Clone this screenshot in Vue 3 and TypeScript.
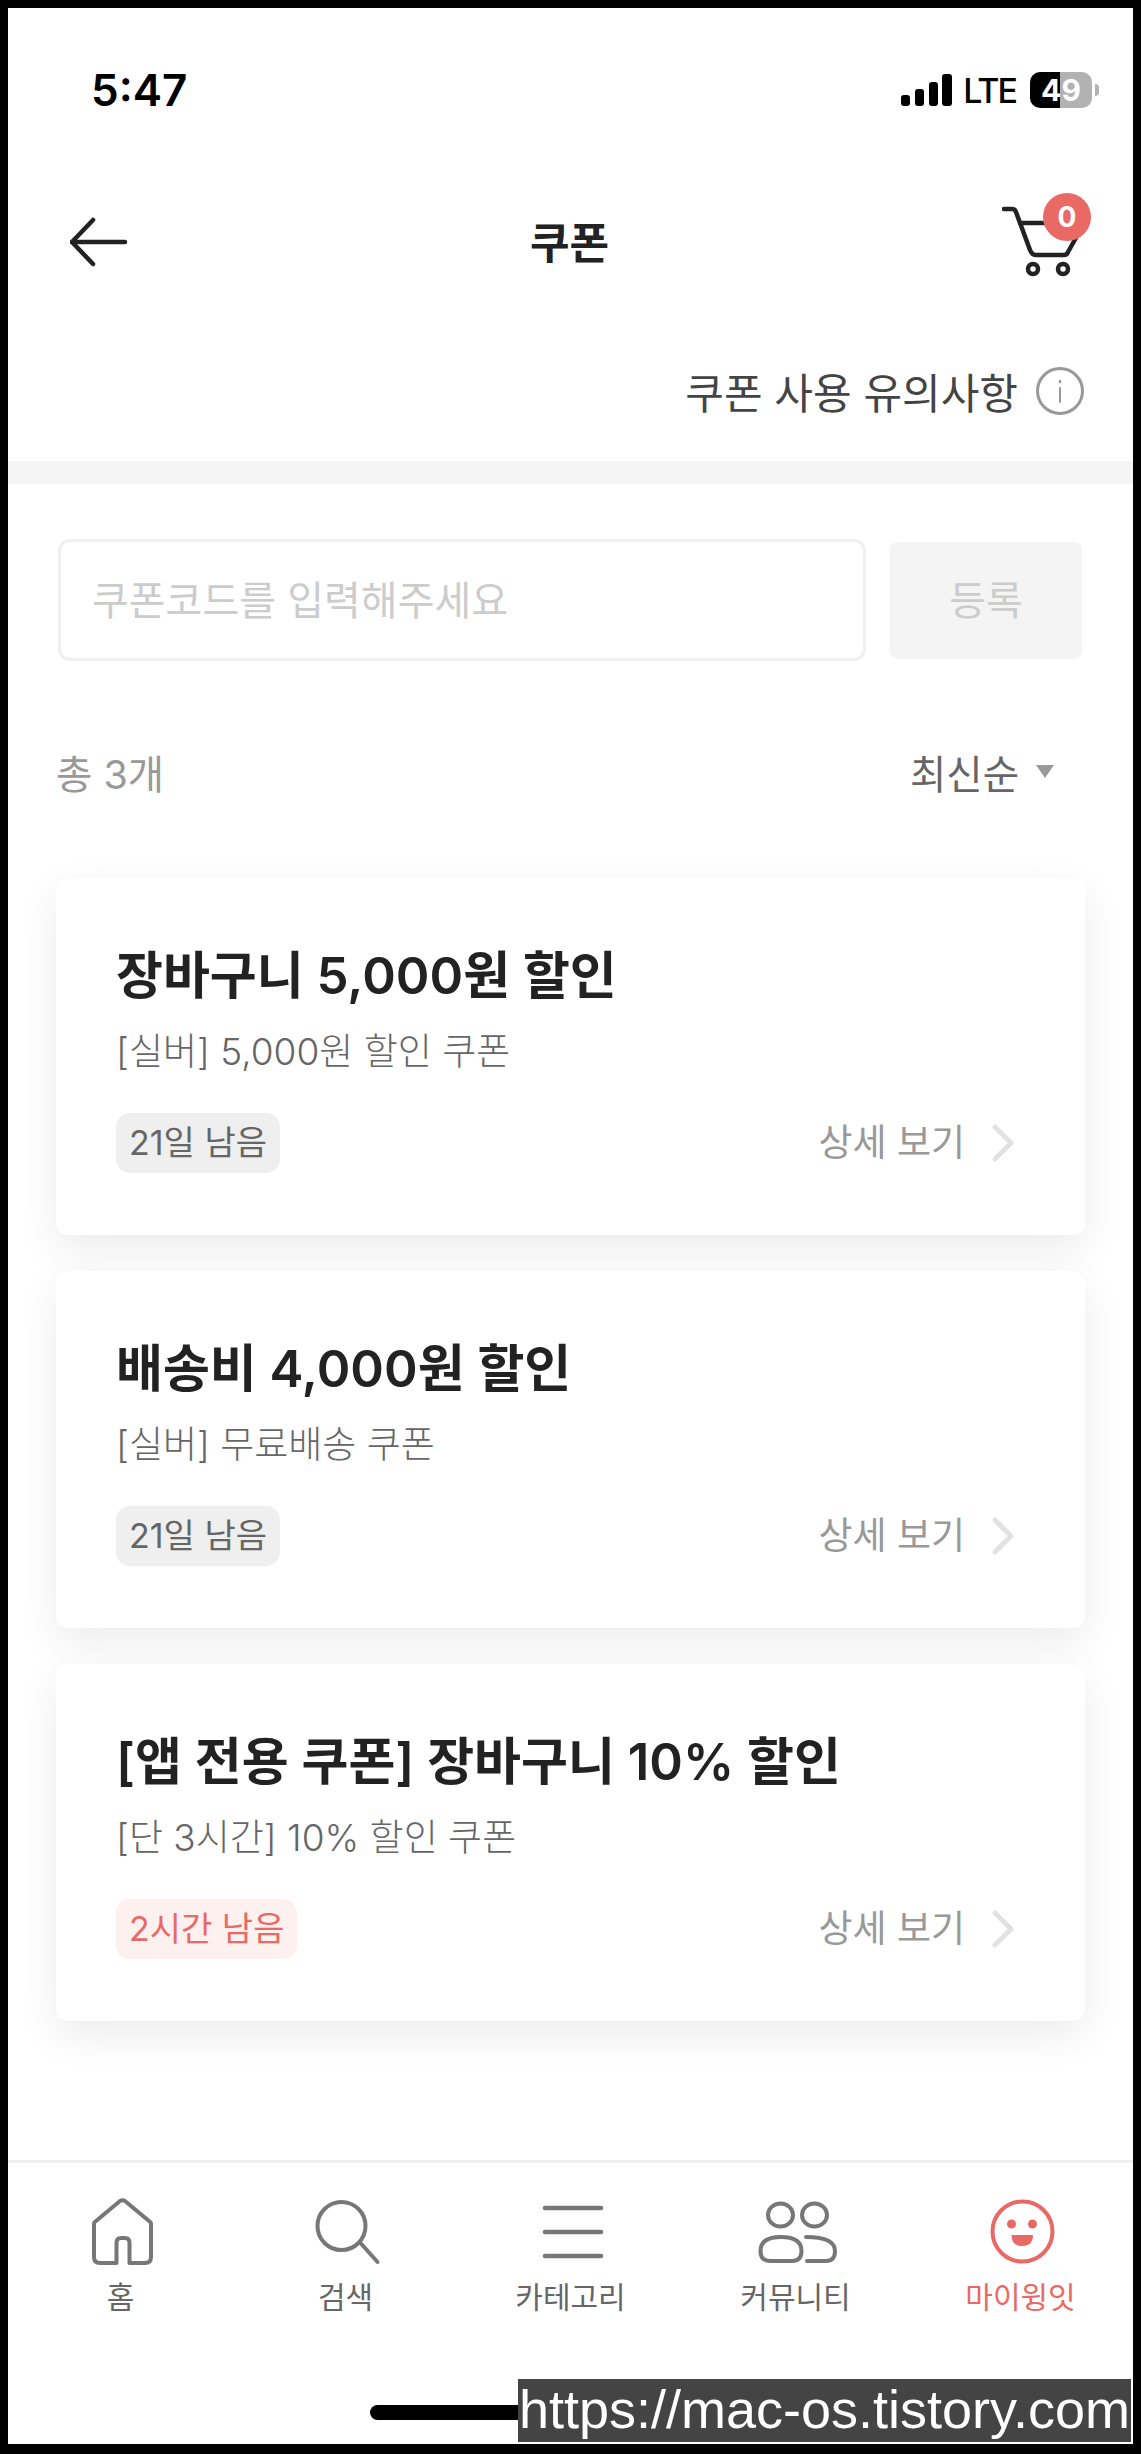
<template>
  <div class="screen">
    <div class="status-bar">
      <span class="clock">5:47</span>
      <div class="status-right">
        <svg class="signal" width="51" height="32" viewBox="0 0 51 32">
          <rect x="0" y="21" width="9" height="11" rx="3" />
          <rect x="14" y="15" width="9" height="17" rx="3" />
          <rect x="28" y="8" width="9" height="24" rx="3" />
          <rect x="41" y="0" width="10" height="32" rx="3" />
        </svg>
        <span class="lte">LTE</span>
        <div class="battery">
          <span class="battery-num">49</span>
        </div>
        <span class="battery-cap"></span>
      </div>
    </div>

    <header class="nav-header">
      <svg class="back" width="58" height="50" viewBox="0 0 58 50" fill="none" stroke="#222" stroke-width="4.5" stroke-linecap="round" stroke-linejoin="round">
        <path d="M23 3 L2 25 L23 47" />
        <path d="M2 25 H55" />
      </svg>
      <h1 class="page-title">쿠폰</h1>
      <div class="cart">
        <svg width="82" height="82" viewBox="0 0 82 82" fill="none" stroke="#222" stroke-width="4.5" stroke-linecap="round" stroke-linejoin="round">
          <path d="M2 9 H10 Q13 9 14 12 L28 50 Q30 55 34 55 H62 Q65 55 66 52 L75 36" />
          <path d="M18 23 H45" />
          <circle cx="31" cy="69" r="5" />
          <circle cx="61" cy="69" r="5" />
        </svg>
        <span class="cart-badge">0</span>
      </div>
    </header>

    <div class="notice-row">
      <span>쿠폰 사용 유의사항</span>
      <svg width="50" height="50" viewBox="0 0 50 50" fill="none" stroke="#999" stroke-linecap="round">
        <circle cx="25" cy="25" r="22.5" stroke-width="3" />
        <path d="M25 22 V36" stroke-width="2" />
        <path d="M25 15 V16" stroke-width="2.5" />
      </svg>
    </div>

    <div class="band"></div>

    <main class="content">
      <div class="code-form">
        <input class="code-input" type="text" placeholder="쿠폰코드를 입력해주세요" />
        <button class="code-submit" type="button">등록</button>
      </div>

      <div class="list-head">
        <span class="total">총 3개</span>
        <span class="sort">최신순<i class="caret"></i></span>
      </div>

      <div class="coupons">
        <article v-for="c in coupons" :key="c.title" class="coupon">
          <h2 class="coupon-title">{{ c.title }}</h2>
          <p class="coupon-desc">{{ c.desc }}</p>
          <div class="coupon-foot">
            <span class="left-tag" :class="{ urgent: c.urgent }">{{ c.left }}</span>
            <span class="detail">
              <span class="detail-text">상세 보기</span>
              <svg width="24" height="38" viewBox="0 0 24 38" fill="none" stroke="#e2e2e2" stroke-width="5" stroke-linecap="round" stroke-linejoin="round">
                <path d="M4 3 L20 19 L4 35" />
              </svg>
            </span>
          </div>
        </article>
      </div>
    </main>

    <nav class="tabbar">
      <div v-for="t in tabs" :key="t.label" class="tab" :class="{ active: t.active }">
        <svg width="72" height="72" viewBox="0 0 72 72" fill="none" :stroke="t.active ? '#e96a65' : '#777'" stroke-width="4" stroke-linecap="round" stroke-linejoin="round">
          <template v-if="t.icon === 'home'">
            <path d="M31.5 67 H15 Q9 67 9 61 V28 Q9 26 11 25 L35 5 Q37.5 3.5 40 5 L64 25 Q66 26 66 28 V61 Q66 67 60 67 H44.5 V47 Q44.5 42 40 42 H36 Q31.5 42 31.5 47 Z" />
          </template>
          <template v-else-if="t.icon === 'search'">
            <circle cx="31.5" cy="30" r="24" />
            <path d="M50.5 47 L67.5 66" />
          </template>
          <template v-else-if="t.icon === 'menu'">
            <path d="M10 12 H66 M10 36 H66 M10 60 H66" stroke-width="4.5" />
          </template>
          <template v-else-if="t.icon === 'people'">
            <ellipse cx="20.5" cy="19" rx="12.5" ry="11.5" />
            <ellipse cx="54.5" cy="19" rx="12.5" ry="11.5" />
            <path d="M10 65 H32 Q41.5 65 41.5 55 Q41.5 41 21 41 Q0.5 41 0.5 55 Q0.5 65 10 65 Z" />
            <path d="M46 41 Q75 41 75 55 Q75 65 66 65 H47" />
          </template>
          <template v-else>
            <circle cx="37.5" cy="35.5" r="30" />
            <circle cx="26.5" cy="28" r="4.5" fill="#e96a65" stroke="none" />
            <circle cx="47.5" cy="28" r="4.5" fill="#e96a65" stroke="none" />
            <path d="M26.5 39 H48 Q48 50 37 50 Q26.5 50 26.5 39 Z" fill="#e96a65" stroke="none" />
          </template>
        </svg>
        <span class="tab-label">{{ t.label }}</span>
      </div>
    </nav>

    <div class="home-slot"><span class="home-bar"></span></div>

    <div class="watermark">https://mac-os.tistory.com</div>
  </div>
</template>

<script setup lang="ts">
interface Coupon {
  title: string;
  desc: string;
  left: string;
  urgent?: boolean;
}

interface Tab {
  label: string;
  icon: string;
  active?: boolean;
}

const coupons: Coupon[] = [
  { title: "장바구니 5,000원 할인", desc: "[실버] 5,000원 할인 쿠폰", left: "21일 남음" },
  { title: "배송비 4,000원 할인", desc: "[실버] 무료배송 쿠폰", left: "21일 남음" },
  { title: "[앱 전용 쿠폰] 장바구니 10% 할인", desc: "[단 3시간] 10% 할인 쿠폰", left: "2시간 남음", urgent: true },
];

const tabs: Tab[] = [
  { label: "홈", icon: "home" },
  { label: "검색", icon: "search" },
  { label: "카테고리", icon: "menu" },
  { label: "커뮤니티", icon: "people" },
  { label: "마이윙잇", icon: "face", active: true },
];
</script>

<style>
html,
body {
  margin: 0;
  background: #000;
}
</style>

<style scoped>
.screen {
  position: relative;
  width: 1141px;
  height: 2454px;
  box-sizing: border-box;
  border: solid #000;
  border-width: 8px 8px 10px;
  background: #fff;
  display: flex;
  flex-direction: column;
  font-family: Inter, "Noto Sans CJK KR", "Noto Sans", sans-serif;
  color: #222;
  overflow: hidden;
}

.status-bar {
  height: 124px;
  flex: none;
  display: flex;
  align-items: center;
  justify-content: space-between;
  padding: 40px 34px 0 83px;
  box-sizing: border-box;
}
.clock {
  font-family: Inter, sans-serif;
  font-size: 44px;
  font-weight: 600;
  color: #000;
}
.status-right {
  display: flex;
  align-items: center;
}
.signal rect {
  fill: #000;
}
.lte {
  font-family: Inter, sans-serif;
  font-size: 34px;
  font-weight: 500;
  letter-spacing: -2px;
  color: #000;
  margin: 0 14px 0 11px;
}
.battery {
  width: 62px;
  height: 36px;
  border-radius: 10px;
  background: linear-gradient(90deg, #000 0 48%, #b2b2b2 48% 100%);
  display: flex;
  align-items: center;
  justify-content: center;
}
.battery-num {
  font-family: Inter, sans-serif;
  font-size: 30px;
  font-weight: 700;
  color: #fff;
}
.battery-cap {
  width: 4px;
  height: 12px;
  margin-left: 3px;
  background: #b2b2b2;
  border-radius: 0 4px 4px 0;
}

.nav-header {
  height: 218px;
  flex: none;
  display: flex;
  align-items: center;
  justify-content: space-between;
  padding: 0 49px 0 62px;
}
.back {
  margin-top: 2px;
}
.page-title {
  margin: 0 0 0 9px;
  padding-bottom: 3px;
  font-size: 43px;
  font-weight: 700;
}
.cart {
  position: relative;
  width: 82px;
  height: 82px;
}
.cart svg {
  display: block;
}
.cart-badge {
  position: absolute;
  left: 41px;
  top: -7px;
  width: 48px;
  height: 48px;
  border-radius: 50%;
  background: #e96a65;
  color: #fff;
  font-size: 28px;
  font-weight: 700;
  display: flex;
  align-items: center;
  justify-content: center;
}

.notice-row {
  height: 111px;
  box-sizing: border-box;
  flex: none;
  display: flex;
  align-items: center;
  justify-content: flex-end;
  gap: 17px;
  padding: 0 48px 30px 0;
  font-size: 42px;
  color: #444;
}
.notice-row svg {
  flex: none;
}

.band {
  height: 23px;
  flex: none;
  background: #f5f5f5;
}

.content {
  padding: 0 48px;
  display: flex;
  flex-direction: column;
}

.code-form {
  display: flex;
  align-items: center;
  gap: 24px;
  margin-top: 55px;
}
.code-input {
  width: 808px;
  height: 122px;
  box-sizing: border-box;
  border: 3px solid #f0f0f0;
  border-radius: 12px;
  padding: 0 30px 0 31px;
  margin-left: 2px;
  font-family: inherit;
  font-size: 40px;
  outline: none;
  background: #fff;
}
.code-input::placeholder {
  color: #ccc;
}
.code-submit {
  width: 192px;
  height: 117px;
  border: none;
  border-radius: 8px;
  padding: 0 0 5px;
  background: #f4f4f4;
  color: #ccc;
  font-family: inherit;
  font-size: 40px;
}

.list-head {
  display: flex;
  align-items: center;
  justify-content: space-between;
  margin-top: 77px;
  height: 66px;
  font-size: 39.5px;
  padding-right: 31px;
}
.total {
  color: #999;
}
.sort {
  color: #666;
  display: flex;
  align-items: center;
}
.caret {
  width: 0;
  height: 0;
  margin-left: 17px;
  border: 9px solid transparent;
  border-top: 13px solid #999;
  border-bottom: 0;
}

.coupons {
  display: flex;
  flex-direction: column;
  gap: 36px;
  margin-top: 74px;
}
.coupon {
  height: 357px;
  box-sizing: border-box;
  padding: 62px 70px 0 60px;
  background: #fff;
  border-radius: 12px;
  box-shadow: 0 14px 40px rgba(0, 0, 0, 0.08);
}
.coupon-title {
  margin: 0;
  font-size: 51px;
  font-weight: 600;
  line-height: 72px;
  color: #222;
}
.coupon-desc {
  margin: 12px 0 0;
  font-size: 37px;
  font-weight: 300;
  line-height: 56px;
  color: #666;
}
.coupon-foot {
  display: flex;
  align-items: center;
  justify-content: space-between;
  margin-top: 33px;
}
.left-tag {
  height: 60px;
  padding: 0 13px;
  border-radius: 14px;
  background: #efefef;
  color: #666;
  font-size: 34px;
  line-height: 60px;
}
.left-tag.urgent {
  background: #fdf1f0;
  color: #e96a65;
}
.detail {
  display: flex;
  align-items: center;
  gap: 26px;
  color: #999;
  font-size: 37px;
}
.detail-text {
  margin-bottom: 6px;
}

.tabbar {
  margin-top: auto;
  flex: none;
  height: 218px;
  box-sizing: border-box;
  border-top: 3px solid #f0f0f0;
  display: flex;
  padding-top: 33px;
}
.tab {
  flex: 1;
  display: flex;
  flex-direction: column;
  align-items: center;
  color: #666;
}
.tab svg {
  display: block;
  overflow: visible;
}
.tab-label {
  font-size: 30px;
  line-height: 46px;
  margin-top: 6px;
}
.tab.active .tab-label {
  color: #e96a65;
}

.home-slot {
  height: 66px;
  box-sizing: border-box;
  flex: none;
  padding: 27px 0 0 362px;
}
.home-bar {
  display: block;
  width: 400px;
  height: 15px;
  border-radius: 8px;
  background: #000;
}

.watermark {
  position: absolute;
  right: 2px;
  bottom: 2px;
  width: 613px;
  height: 63px;
  background: #444;
  color: #fff;
  font-family: "Liberation Sans", sans-serif;
  font-size: 54px;
  line-height: 60px;
  text-align: center;
  white-space: nowrap;
}
</style>
